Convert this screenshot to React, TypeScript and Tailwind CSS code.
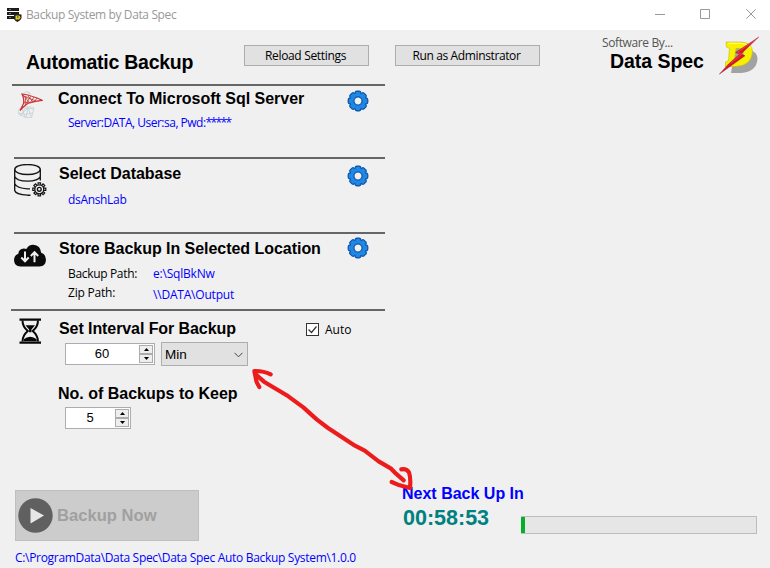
import type { ReactNode } from "react";

const small = "font-['Open_Sans',sans-serif] text-[12px] leading-4 whitespace-pre";
const bold = "font-['Liberation_Sans',Arial,sans-serif] font-bold whitespace-pre";

function Gear() {
  const teeth = Array.from({ length: 8 }, (_, i) => i * 45);
  return (
    <svg className="size-[22px] shrink-0" viewBox="-11 -11 22 22">
      <g fill="#1e88e5" stroke="#1259ae" strokeWidth="1.4">
        {teeth.map((a) => (
          <rect key={a} x="-2.7" y="-9.7" width="5.4" height="6" rx="1.4" transform={`rotate(${a})`} />
        ))}
        <circle r="8.4" />
      </g>
      <g fill="#1e88e5">
        {teeth.map((a) => (
          <rect key={a} x="-2.2" y="-9.1" width="4.4" height="5" rx="1" transform={`rotate(${a})`} />
        ))}
      </g>
      <circle r="4.1" fill="#f0f0f0" stroke="#1259ae" strokeWidth="1.3" />
    </svg>
  );
}

function AppIcon() {
  return (
    <svg className="mt-[7px] h-4 w-[15px] shrink-0" viewBox="0 0 15 16">
      <path d="M0 1h12v3H0zM0 5h12v3H0zM0 9h8v3H0z" fill="#1b1b1b" />
      <path d="M2 2.5h2M2 6.5h2M2 10.5h2" stroke="#999" strokeWidth=".7" />
      <path d="M7 7.5q2 0 3.5-1.5q1.5 1.5 4 1.5v3.5q-.5 2.5-4 4q-3.5-1.5-3.5-4z" fill="#222" />
      <path d="M8.5 8.5h3q1.8 0 1.8 1.7q0 2.3-2.8 2.3h-2z" fill="#e8cf18" />
      <path d="M10 10h1.5" stroke="#222" />
    </svg>
  );
}

function SqlIcon() {
  return (
    <svg className="mt-[5px] h-[28px] w-[26px] shrink-0" viewBox="18 91 26 28" fill="none">
      <path d="M23 94l4-2.500 4 3M24 94l2 5M29 92l-1 6" stroke="#c5cdd0" strokeWidth=".8" />
      <path d="M19 109q7-4 15 -1l-2.500 9.500q-7 1-13-3.500zM18.500 113q6 3 14 0M22 108l3 9.500M28 107l-2 10.500M33 109l-8-1-4 8M20 116l8-8.500 3 9" stroke="#c9d2d5" strokeWidth=".9" />
      <path d="M22 94q9 1 20.700 6.500q-11 .5-15.700 3.500q-4 3-7 6.500q2-3.500 3.500-7q1-4-1.500-9.500z" stroke="#c9302f" strokeWidth="1.2" />
      <path d="M23 95l7 8 12-3M26 96l-1 8M31 96l-6 9M34 97l-4 6-6-1M37 98l-3 4M23 96l13 5M28 96l5 6" stroke="#cc3534" strokeWidth=".85" />
    </svg>
  );
}

function DatabaseIcon() {
  const teeth = Array.from({ length: 8 }, (_, i) => i * 45);
  return (
    <svg className="mt-[5px] h-[33px] w-[33px] shrink-0" viewBox="14 164 33 33" fill="none" stroke="#161616" strokeWidth="1.35">
      <ellipse cx="27.5" cy="169.500" rx="12.8" ry="5" />
      <path d="M14.700 169.500v21q1 4 12.800 4.700h3M40.300 169.500v11M14.700 176.500q2 4.500 12.800 4.700q11-.2 12.800-4.700M14.700 183.800q2 4.500 12.800 5h2.500" />
      <g transform="translate(39.3 189.3)">
        <circle r="4.5" />
        {teeth.map((a) => (
          <path key={a} d="M-1.200-4.500v-2h2.400v2" transform={`rotate(${a})`} strokeWidth="1.2" />
        ))}
        <circle r="1.9" />
      </g>
    </svg>
  );
}

function CloudIcon() {
  return (
    <svg className="mt-[10px] h-[23px] w-8 shrink-0" viewBox="14 244 32 23">
      <path d="M20.500 266.500q-6.300-.5-6.500-6.500q.3-5 4.300-6.300q.5-5 5.500-5.200q1.500 0 2.500.5q2.200-4.300 7-4.300q7.200.5 7.900 8q4.700 1.500 4.800 7q-.3 6.300-6.500 6.800z" fill="#0b0b0b" />
      <path d="M25 251.500v9.500M21.300 257.500l3.700 3.800 3.700-3.800M34.500 262.300v-9.500M30.800 256l3.700-3.800 3.700 3.800" fill="none" stroke="#f0f0f0" strokeWidth="2" />
    </svg>
  );
}

function HourglassIcon() {
  return (
    <svg className="mt-[7px] h-[26px] w-[22px] shrink-0" viewBox="19 318 22 26">
      <path d="M19.500 318.500h21.500v2.300H19.500zM19.500 341.400h21.500v2.400H19.500z" fill="#070707" />
      <path d="M22.500 320.500q0 6 5.300 10.500q-5.300 4.500-5.300 10.500M38 320.500q0 6-5.300 10.500q5.300 4.500 5.300 10.500" fill="none" stroke="#070707" strokeWidth="2" />
      <path d="M25.500 325.300h9.500l-3.600 4.200v2.800h-2.300v-2.800zM23.700 341.300v-2q3-2.300 6.500-2.500q3.500.2 6.500 2.500v2z" fill="#070707" />
    </svg>
  );
}

function Logo() {
  return (
    <svg className="h-10 w-[41px] shrink-0" viewBox="719 36 41 40">
      <defs>
        <filter id="shade" x="-30%" y="-30%" width="160%" height="160%"><feGaussianBlur stdDeviation=".7" /></filter>
      </defs>
      <path transform="translate(5 6.5)" d="M730 43h10q12 0 12.500 9.500q-1 13-16.500 14h-10l3-18z" fill="#a2a2a2" filter="url(#shade)" />
      <path d="M733 47h10v14h-11z" fill="#a8a890" />
      <path fillRule="evenodd" d="M726 42h14q12.500 0 12.500 10q-1 13.500-16.500 14.500h-10.500v-4.500l3-1.500 1-12-3-1.500zM736 48.500l-1.500 11.500q8.500-.5 9-7.500q0-4-4.500-4z" fill="#f8f000" stroke="#c4ba00" strokeWidth=".6" />
      <path d="M728.500 43.300h11.500q8.500.2 10.500 5" stroke="#ffff70" strokeWidth="1.2" fill="none" />
      <path d="M758.800 37L735.500 52.500l4 1.700L728.500 64l-9.200 10.200L745 55.800l-3.800-2z" fill="#d81828" stroke="#8d1430" strokeWidth=".4" />
      <path d="M756 39.500L737.500 52.300l4 2-11 9" stroke="#ff6c64" strokeWidth=".5" fill="none" />
    </svg>
  );
}

function Spinner({ value, wide }: { value: string; wide?: boolean }) {
  return (
    <div className={`flex h-[22px] border border-[#abadb3] bg-white ${wide ? "w-[90px]" : "w-[66px]"}`}>
      <span className="flex-1 pr-px text-center font-['Liberation_Sans',Arial,sans-serif] text-[13px] leading-[20px]">{value}</span>
      <div className="mt-px flex h-[18px] w-[15px] flex-col">
        {["M0 3h5L2.500 0z", "M0 0h5L2.500 3z"].map((d) => (
          <div key={d} className="flex h-[9px] w-[14px] items-center justify-center border border-[#acacac] bg-[#eee]">
            <svg className="h-[3px] w-[5px]" viewBox="0 0 5 3"><path d={d} fill="#000" /></svg>
          </div>
        ))}
      </div>
    </div>
  );
}

function Rule({ className }: { className: string }) {
  return <div className={`h-[2px] shrink-0 bg-[#666] ${className}`} />;
}

function Heading({ children, className }: { children: ReactNode; className: string }) {
  return <div className={`${bold} text-[16px] leading-5 ${className}`}>{children}</div>;
}

export default function App() {
  return (
    <div className="relative flex h-[568px] w-[770px] flex-col overflow-hidden bg-[#f0f0f0] text-black">
      <header className="flex h-[30px] shrink-0 bg-white pl-[7px]">
        <AppIcon />
        <span className={`${small} mt-[7px] ml-[4px] tracking-[-0.38px] text-[#999]`}>Backup System by Data Spec</span>
        <div className="ml-auto flex pr-[13px]">
          <svg className="h-[30px] w-[102px]" viewBox="655 0 102 30" fill="none" stroke="#999">
            <path d="M655 14.500h10M700.500 9.500h9v9h-9zM746.300 9.300l9.400 9.400M755.700 9.300l-9.400 9.400" />
          </svg>
        </div>
      </header>
      <div className="flex h-[538px]">
        <main className="flex w-[385px] flex-col">
          <div className="flex h-[54px] shrink-0">
            <h1 className={`${bold} mt-5 ml-[26px] w-[218px] text-[19.5px] leading-6 tracking-[-0.25px]`}>Automatic Backup</h1>
            <button className={`${small} mt-[15px] h-[21px] w-[125px] border border-[#adadad] bg-[#e1e1e1] pt-px pr-[2px] text-center tracking-[-0.33px]`}>Reload Settings</button>
          </div>
          <section className="flex h-[73px] flex-col">
            <Rule className="ml-3" />
            <div className="flex pl-[18px]">
              <SqlIcon />
              <div className="ml-[14px] w-[290px]">
                <Heading className="mt-[3px] tracking-[-0.02px]">Connect To Microsoft Sql Server</Heading>
                <div className={`${small} mt-[6px] ml-[10px] tracking-[-0.5px] text-[#0000ff]`}>
                  Server:DATA, User:sa, Pwd:<span className="tracking-[-1.65px]">*****</span>
                </div>
              </div>
              <div className="-ml-px mt-[4px]"><Gear /></div>
            </div>
          </section>
          <section className="flex h-[75px] flex-col">
            <Rule className="ml-[14px]" />
            <div className="flex pl-[14px]">
              <DatabaseIcon />
              <div className="ml-[12px] w-[288px]">
                <Heading className="mt-[5px] tracking-[-0.04px]">Select Database</Heading>
                <div className={`${small} mt-[8px] ml-[9px] tracking-[-0.33px] text-[#0000ff]`}>dsAnshLab</div>
              </div>
              <div className="mt-[6px]"><Gear /></div>
            </div>
          </section>
          <section className="flex h-[77px] flex-col">
            <Rule className="ml-[14px]" />
            <div className="flex pl-[14px]">
              <CloudIcon />
              <div className="ml-[13px] w-[288px]">
                <Heading className="mt-[5px] tracking-[-0.04px]">Store Backup In Selected Location</Heading>
                <div className="mt-[7px] ml-[9px] flex">
                  <div className={`${small} w-[85px] tracking-[-0.33px]`}>
                    <div>Backup Path:</div>
                    <div className="mt-[3px] tracking-[-0.2px]">Zip Path:</div>
                  </div>
                  <div className={`${small} tracking-[-0.2px] text-[#0000ff]`}>
                    <div>e:\SqlBkNw</div>
                    <div className="mt-[5px]">\\DATA\Output</div>
                  </div>
                </div>
              </div>
              <div className="mt-[3px]"><Gear /></div>
            </div>
          </section>
          <section className="flex h-[181px] flex-col">
            <Rule className="ml-[11px]" />
            <div className="flex pl-[19px]">
              <HourglassIcon />
              <div className="ml-[17px] w-[327px]">
                <div className="flex">
                  <Heading className="mt-[8px] ml-px w-[247px] tracking-[-0.08px]">Set Interval For Backup</Heading>
                  <div className="mt-[12px] flex size-[13px] items-center justify-center border border-[#333] bg-white">
                    <svg className="size-[11px]" viewBox="0 0 11 11"><path d="M1.500 5.500l3 3 5-6" fill="none" stroke="#333" strokeWidth="1.2" /></svg>
                  </div>
                  <span className={`${small} mt-[11px] ml-[6px]`}>Auto</span>
                </div>
                <div className="mt-[3px] ml-[7px] flex">
                  <div className="mt-px"><Spinner value="60" wide /></div>
                  <div className="ml-[6px] flex h-6 w-[87px] justify-between border border-[#adadad] bg-[#e1e1e1] pr-[4px] pl-[3px]">
                    <span className="font-['Liberation_Sans',Arial,sans-serif] text-[13.5px] leading-[23px]">Min</span>
                    <svg className="mt-[9px] h-[6px] w-[9px]" viewBox="0 0 9 6"><path d="M.5.8l4 4 4-4" fill="none" stroke="#444" /></svg>
                  </div>
                </div>
                <Heading className="mt-[18px]">No. of Backups to Keep</Heading>
                <div className="mt-[3px] ml-[7px]"><Spinner value="5" /></div>
              </div>
            </div>
          </section>
          <button className="ml-[15px] flex h-[51px] w-[184px] shrink-0 items-center border border-[#bfbfbf] bg-[#ccc] pl-[2px]">
            <svg className="size-[35px]" viewBox="0 0 35 35"><circle cx="17.5" cy="17.5" r="17.2" fill="#606060" /><path d="M12.500 10v15.500L26 17.500z" fill="#e7e7e7" /></svg>
            <span className={`${bold} ml-[4px] text-[16.6px] leading-5 text-[#a0a0a0]`}>Backup Now</span>
          </button>
          <div className={`${small} mt-[9px] ml-[15px] tracking-[-0.31px] text-[#0000ff]`}>C:\ProgramData\Data Spec\Data Spec Auto Backup System\1.0.0</div>
        </main>
        <aside className="flex w-[385px] flex-col">
          <div className="flex h-[54px] pl-[10px]">
            <button className={`${small} mt-[15px] h-[21px] w-[145px] border border-[#adadad] bg-[#e1e1e1] pt-px pr-[2px] text-center tracking-[-0.38px]`}>Run as Adminstrator</button>
            <div className="mt-[5px] ml-[62px] w-[117px]">
              <div className={`${small} tracking-[-0.38px] text-[#555]`}>Software By...</div>
              <div className={`${bold} -mt-[2px] ml-[8px] text-[19.5px] leading-6 tracking-[-0.05px]`}>Data Spec</div>
            </div>
            <div className="mt-[6px]"><Logo /></div>
          </div>
          <div className="mt-[399px] ml-[18px] flex">
            <div className="w-[118px]">
              <div className={`${bold} mt-px -ml-px text-[16px] leading-5 text-[#0000ff]`}>Next Back Up In</div>
              <div className={`${bold} text-[21.5px] leading-7 text-[#008080]`}>00:58:53</div>
            </div>
            <div className="mt-[33px] flex h-[18px] w-[236px] border border-l-0 border-[#bcbcbc] bg-[#e6e6e6]">
              <div className="h-full w-1 bg-[#06b025]" />
            </div>
          </div>
        </aside>
      </div>
      <svg className="pointer-events-none absolute top-[360px] left-[240px] h-[140px] w-[190px]" viewBox="0 0 570 420" fill="none" stroke="#ed1c1c" strokeWidth="12.5" strokeLinecap="round" strokeLinejoin="round">
        <path d="M47 43L72 65L145 109L190 142L230 178L264 204L345 257L374 272L416 304L452 325L468 341L491 361M92 43Q70 32 43 33L47 53Q49 69 58 81M484 328Q499 325 507 337Q513 354 510 384L479 376L455 366" />
      </svg>
    </div>
  );
}
